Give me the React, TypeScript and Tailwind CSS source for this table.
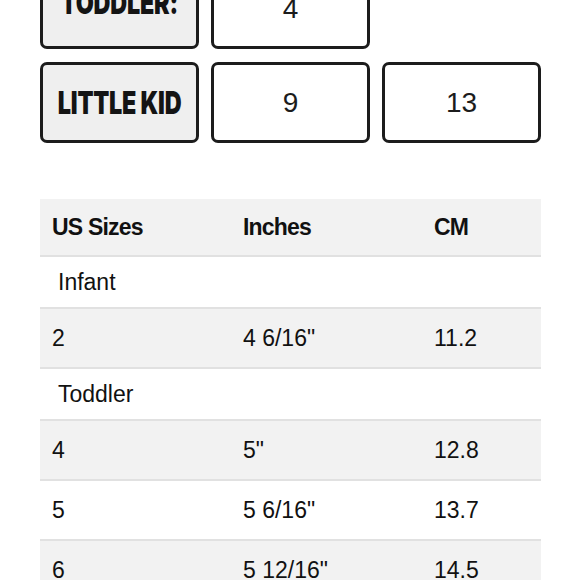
import React from "react";

const boxBase =
  "h-[81px] rounded-[7px] border-[3px] border-[#1c1c1c] flex items-center justify-center";

const Label: React.FC<{ text: string; className?: string }> = ({ text, className }) => (
  <div className={`${boxBase} bg-[#efefef]`}>
    <span
      className={`inline-block whitespace-nowrap origin-center scale-x-[0.73] font-black text-[32px] leading-none text-[#141414] tracking-[-0.3px] ${className ?? ""}`}
      style={{ fontFamily: "Inter, 'DejaVu Sans', sans-serif" }}
    >
      {text}
    </span>
  </div>
);

const Size: React.FC<{ value: string }> = ({ value }) => (
  <div className={`${boxBase} bg-white`}>
    <span className="text-[28px] leading-none text-[#1c1c1c] font-medium">{value}</span>
  </div>
);

type Row =
  | { kind: "section"; label: string }
  | { kind: "data"; us: string; inches: string; cm: string };

const rows: Row[] = [
  { kind: "section", label: "Infant" },
  { kind: "data", us: "2", inches: "4 6/16\"", cm: "11.2" },
  { kind: "section", label: "Toddler" },
  { kind: "data", us: "4", inches: "5\"", cm: "12.8" },
  { kind: "data", us: "5", inches: "5 6/16\"", cm: "13.7" },
  { kind: "data", us: "6", inches: "5 12/16\"", cm: "14.5" },
];

export default function App() {
  let shade = true;
  return (
    <div
      className="w-[580px] h-[580px] overflow-hidden bg-white text-[#111]"
      style={{ fontFamily: "'Liberation Sans', Arial, sans-serif" }}
    >
      <div className="ml-[40px] w-[501px] mt-[-32px] grid grid-cols-3 gap-x-[12px] gap-y-[13px]">
        <Label text="TODDLER:" className="-translate-y-[6px]" />
        <Size value="4" />
        <div />
        <Label text="LITTLE KID" />
        <Size value="9" />
        <Size value="13" />
      </div>

      <div className="ml-[40px] w-[501px] mt-[56px]">
        <div className="grid grid-cols-[191px_191px_1fr] h-[58px] items-center bg-[#f2f2f2] border-b-2 border-[#e1e1e1] font-bold text-[23px] tracking-[-0.8px]">
          <div className="pl-3">US Sizes</div>
          <div className="pl-3">Inches</div>
          <div className="pl-3">CM</div>
        </div>
        {rows.map((r, i) => {
          if (r.kind === "section") {
            shade = true;
            return (
              <div
                key={i}
                className="h-[52px] flex items-center border-b-2 border-[#e1e1e1] bg-white pl-[18px] text-[23px]"
              >
                {r.label}
              </div>
            );
          }
          const bg = shade ? "bg-[#f2f2f2]" : "bg-white";
          shade = !shade;
          return (
            <div
              key={i}
              className={`grid grid-cols-[191px_191px_1fr] h-[60px] items-center border-b-2 border-[#e1e1e1] text-[23px] ${bg}`}
            >
              <div className="pl-3">{r.us}</div>
              <div className="pl-3">{r.inches}</div>
              <div className="pl-3">{r.cm}</div>
            </div>
          );
        })}
      </div>
    </div>
  );
}
